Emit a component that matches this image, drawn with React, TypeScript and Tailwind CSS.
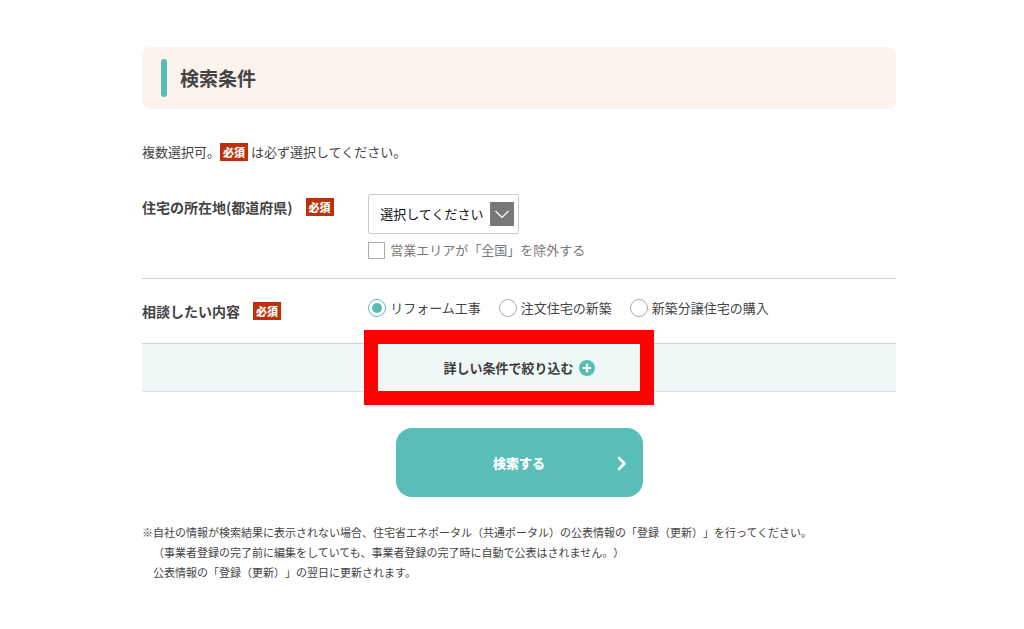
import React, { useState } from 'react';

const contentOptions = ['リフォーム工事', '注文住宅の新築', '新築分譲住宅の購入'];

const prefectures = ['東京都', '神奈川県', '大阪府', '愛知県', '福岡県'];

const RequiredBadge: React.FC = () => (
  <span className="inline-block bg-[#c03008] px-[3px] text-[11px] leading-[18px] font-black text-white">必須</span>
);

const App: React.FC = () => {
  const [prefecture, setPrefecture] = useState('');
  const [excludeNationwide, setExcludeNationwide] = useState(false);
  const [content, setContent] = useState(contentOptions[0]);

  return (
    <div className="bg-white pt-[47px] pb-12 pl-[14px] font-['Noto_Sans_CJK_JP',sans-serif] text-[13px] leading-5 text-[#444] [text-spacing-trim:space-all]">
      <main className="mx-auto max-w-[754px]">
        <div className="flex items-center rounded-lg bg-[#fbf3ec] px-[19px] py-3">
          <span className="h-[38px] w-[6px] rounded-full bg-[#59bdb3]" />
          <h1 className="ml-[13px] text-[19px] leading-[38px] font-bold">検索条件</h1>
        </div>

        <p className="mt-[33px] flex items-center">
          複数選択可。
          <RequiredBadge />
          <span className="ml-[3px]">は必ず選択してください。</span>
        </p>

        <form className="mt-8" onSubmit={(e) => e.preventDefault()}>
          <div className="flex border-b border-[#d0d0d0] pb-[18px]">
            <div className="flex w-[30%] shrink-0 items-center self-start pt-[3px]">
              <label htmlFor="prefecture" className="text-sm font-bold">住宅の所在地(都道府県)</label>
              <span className="ml-[13px] flex"><RequiredBadge /></span>
            </div>
            <div>
              <div className="relative w-[151px]">
                <select
                  id="prefecture"
                  value={prefecture}
                  onChange={(e) => setPrefecture(e.target.value)}
                  className="block h-10 w-full appearance-none rounded-xs border border-[#ccc] bg-white pl-[11px] text-[13px] text-[#111]"
                >
                  <option value="">選択してください</option>
                  {prefectures.map((name) => (
                    <option key={name} value={name}>{name}</option>
                  ))}
                </select>
                <svg className="pointer-events-none absolute top-2 right-[5px] size-6" viewBox="0 0 24 24" fill="none">
                  <rect width="24" height="24" fill="#777" />
                  <path d="M5.5 9l6.5 6.5L18.500 9" stroke="#fff" strokeWidth="1.2" />
                </svg>
              </div>
              <label className="mt-[6px] flex items-center text-[#777]">
                <input
                  type="checkbox"
                  checked={excludeNationwide}
                  onChange={(e) => setExcludeNationwide(e.target.checked)}
                  className="mr-[5px] size-[17px] appearance-none border border-[#aaa] bg-white checked:bg-[#59bdb3]"
                />
                営業エリアが「全国」を除外する
              </label>
            </div>
          </div>

          <div className="flex items-start pt-[19px] pb-[22px]">
            <div className="flex w-[30%] shrink-0 items-center pt-[3px]">
              <span id="content-label" className="text-sm font-bold">相談したい内容</span>
              <span className="ml-[13px] flex"><RequiredBadge /></span>
            </div>
            <div role="radiogroup" aria-labelledby="content-label" className="flex gap-[18px]">
              {contentOptions.map((option) => (
                <label key={option} className="flex items-center whitespace-nowrap">
                  <input
                    type="radio"
                    name="content"
                    value={option}
                    checked={content === option}
                    onChange={() => setContent(option)}
                    className="mr-1 size-[18px] appearance-none rounded-full border border-[#aaa] bg-white bg-clip-content p-[3px] checked:border-[#59bdb3] checked:bg-[#59bdb3]"
                  />
                  {option}
                </label>
              ))}
            </div>
          </div>

          <div className="relative border-t border-b border-t-[#ccd3d3] border-b-[#d5e3e2] bg-[#eff8f7]">
            <button type="button" className="flex h-[47px] w-full items-center justify-center gap-[5px] font-bold text-[#3c3c3c]">
              詳しい条件で絞り込む
              <svg className="size-4" viewBox="0 0 16 16">
                <circle cx="8" cy="8" r="8" fill="#59bdb3" />
                <path d="M8 3.800v8.400M3.800 8h8.400" stroke="#fff" strokeWidth="2.200" />
              </svg>
            </button>
            <div className="pointer-events-none absolute -inset-y-[14px] left-[calc(50%-155px)] w-[290px] border-[14px] border-[#fe0000]" />
          </div>

          <button
            type="submit"
            className="relative mx-auto mt-9 block h-[69px] w-[247px] rounded-2xl bg-[#59beb7] text-[13px] font-black text-white"
          >
            検索する
            <svg className="absolute top-[28px] right-4 h-[15px] w-[10px]" viewBox="0 0 10 15" fill="none">
              <path d="M2 2l5.500 5.500L2 13" stroke="#fff" strokeWidth="2.800" strokeLinecap="round" strokeLinejoin="round" />
            </svg>
          </button>
        </form>

        <div className="mt-[25px] text-[11px] leading-5">
          <p>※自社の情報が検索結果に表示されない場合、住宅省エネポータル（共通ポータル）の公表情報の「登録（更新）」を行ってください。</p>
          <p className="pl-[11px]">（事業者登録の完了前に編集をしていても、事業者登録の完了時に自動で公表はされません。）</p>
          <p className="pl-[11px]">公表情報の「登録（更新）」の翌日に更新されます。</p>
        </div>
      </main>
    </div>
  );
};

export default App;
